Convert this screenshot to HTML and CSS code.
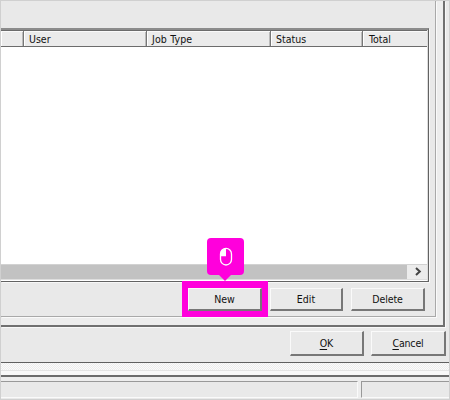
FILE: index.html
```html
<!DOCTYPE html>
<html lang="en">
<head>
<meta charset="utf-8">
<title>Job list</title>
<link rel="stylesheet" href="styles.css">
</head>
<body>
<main class="window">
  <section class="dialog">
    <div class="tab-frame">
      <div class="tab-page">
        <div class="list">
          <div class="list-head">
            <span class="col col-first"></span>
            <span class="col col-user">User</span>
            <span class="col col-job">Job Type</span>
            <span class="col col-status">Status</span>
            <span class="col col-total">Total</span>
          </div>
          <div class="list-body"></div>
          <div class="scrollbar">
            <div class="thumb"></div>
            <svg class="arrow" width="19" height="14" viewBox="0 0 19 14"><path d="M9 3l3.800 3.500L9 10" fill="none" stroke="#444" stroke-width="2"/></svg>
          </div>
        </div>
        <div class="actions">
          <div class="highlight">
            <button class="btn btn-new">New</button>
            <div class="callout">
              <svg width="14" height="20" viewBox="0 0 14 20"><path d="M7 1.400V9.200H1.500V7C1.500 3.700 3.700 1.400 7 1.400Z" fill="#fff"/><rect x="1.500" y="1.400" width="11" height="16.600" rx="5.500" fill="none" stroke="#fff" stroke-width="1.300"/></svg>
            </div>
          </div>
          <button class="btn btn-edit">Edit</button>
          <button class="btn btn-delete">Delete</button>
        </div>
      </div>
    </div>
    <div class="confirm">
      <button class="btn btn-ok"><span><u>O</u>K</span></button>
      <button class="btn btn-cancel"><span><u>C</u>ancel</span></button>
    </div>
  </section>
  <div class="texture"></div>
  <div class="separator"></div>
  <footer class="status">
    <div class="status-main"></div>
    <div class="status-side"></div>
  </footer>
</main>
</body>
</html>
```
FILE: styles.css
```css
* { box-sizing: border-box; }
body { margin: 0; }
.window {
  width: 450px;
  height: 400px;
  border: 1px solid #d0d0d0;
  background: #e9e9e9;
  overflow: hidden;
  display: flex;
  flex-direction: column;
  font: 10.5px "DejaVu Sans Condensed", "DejaVu Sans", sans-serif;
  color: #111;
}
.dialog {
  height: 362px;
  flex: none;
  border-bottom: 1px solid #606060;
}
.tab-frame {
  width: 444px;
  height: 326px;
  border-right: 2px solid #707070;
  border-bottom: 2px solid #707070;
  background: #ededed;
  box-shadow: 1px 1px #f8f8f8;
}
.tab-page {
  width: 435px;
  height: 316px;
  padding-top: 27px;
  border-right: 1px solid #a9a9a9;
  border-bottom: 1px solid #a9a9a9;
  background: #e9e9e9;
  box-shadow: 1px 1px #fafafa;
}
.list {
  width: 428px;
  height: 254px;
  border-top: 2px solid #8c8c8c;
  border-right: 1px solid #626262;
  border-bottom: 1px solid #626262;
  background: #fff;
  box-shadow: inset -1px 0 #ddd, 1px 1px #f7f7f7;
}
.list-head {
  display: flex;
  width: 426px;
  height: 17px;
  border-top: 1px solid #6c6c6c;
  border-bottom: 1px solid #6c6c6c;
  background: #ebebeb;
}
.col {
  padding: 2px 0 0 5px;
  line-height: 13px;
  border-right: 1px solid #777;
  box-shadow: inset 0 1px #fafafa, inset 1px 0 #fff, inset -1px 0 #bbb;
}
.col-first { width: 23px; }
.col-user { width: 123px; }
.col-job { width: 124px; letter-spacing: 0.15px; }
.col-status { width: 92px; }
.col-total {
  width: 64px;
  border-right: 0;
  padding-left: 6px;
  box-shadow: inset 0 1px #fafafa, inset 1px 0 #fff;
}
.list-body { height: 217px; }
.scrollbar {
  display: flex;
  width: 426px;
  height: 16px;
  background: #ececec;
  border-top: 1px solid #d2d2d2;
  border-bottom: 1px solid #dedede;
}
.thumb { width: 406px; background: #c2c2c2; }
.arrow { display: block; }
.actions { display: flex; }
.highlight {
  position: relative;
  width: 86px;
  height: 36px;
  margin: -1px 0 0 181px;
  flex: none;
  padding: 7px 6px 6px;
  background: #ff00dc;
}
.callout {
  position: absolute;
  left: 25px;
  top: -43px;
  width: 37px;
  height: 37px;
  border-radius: 4px;
  background: #ff00dc;
  display: flex;
  align-items: center;
  justify-content: center;
}
.callout::after {
  content: "";
  position: absolute;
  left: 12px;
  top: 37px;
  border: 6px solid transparent;
  border-top-color: #ff00dc;
  border-bottom: 0;
}
.btn {
  display: flex;
  align-items: center;
  justify-content: center;
  padding: 0;
  font: inherit;
  color: inherit;
  background: #e9e9e9;
  border: solid;
  border-width: 1px 2px 2px 1px;
  border-color: #fafafa #777 #777 #fafafa;
}
.btn-new { width: 74px; height: 23px; }
.btn-edit { width: 73px; height: 23px; margin: 6px 0 0 2px; }
.btn-delete { width: 74px; height: 23px; margin: 6px 0 0 8px; letter-spacing: -0.1px; }
.confirm {
  display: flex;
  justify-content: flex-end;
  gap: 7px;
  padding: 4px 3px 0 0;
}
.confirm u { text-underline-offset: 2px; text-decoration-thickness: 1px; }
.btn-ok { width: 74px; height: 25px; }
.btn-cancel { width: 75px; height: 25px; letter-spacing: -0.15px; }
.texture {
  height: 7px;
  flex: none;
  background: repeating-conic-gradient(#ededed 0 25%, #fbfbfb 0 50%) 0 0 / 2px 2px;
}
.separator {
  height: 7px;
  flex: none;
  border-top: 1px solid #e4e4e4;
  border-bottom: 2px solid #6c6c6c;
  background: #f8f8f8;
}
.status {
  display: flex;
  gap: 3px;
  height: 21px;
  padding-top: 4px;
  background: #ededed;
}
.status-main, .status-side {
  height: 17px;
  background: #e9e9e9;
  border-top: 1px solid #999;
  border-bottom: 1px solid #fafafa;
}
.status-main { width: 357px; border-right: 1px solid #fafafa; }
.status-side { flex: 1; border-left: 1px solid #999; }
```
